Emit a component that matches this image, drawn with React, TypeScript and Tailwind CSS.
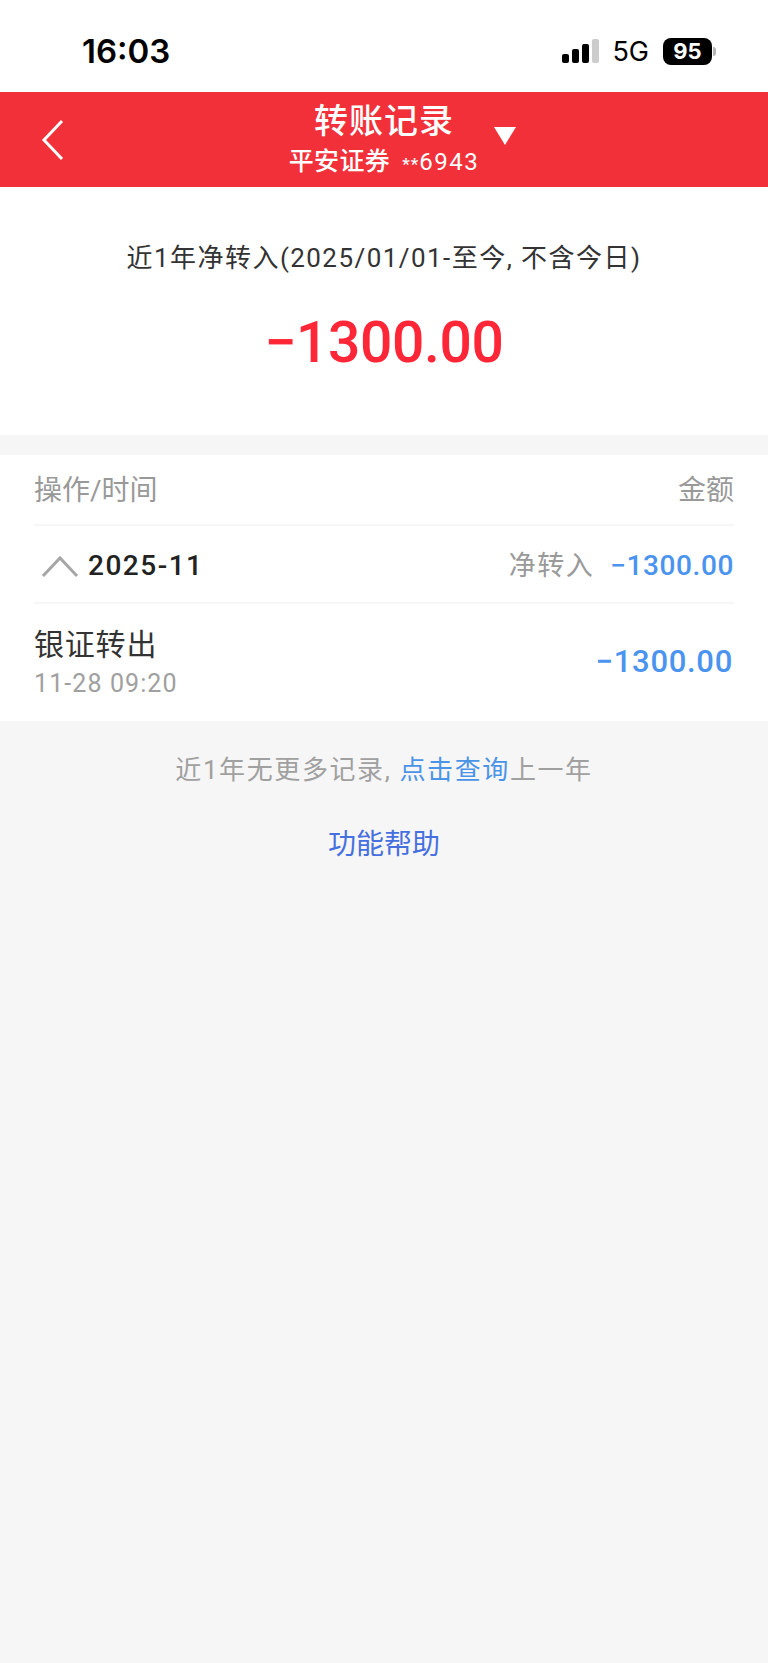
import React from 'react';

const cjk = { fontFamily: 'Roboto, "Noto Sans CJK SC", sans-serif' };

const StatusBar = () => (
  <div className="h-[92px] bg-white flex items-center justify-between pl-[82px] pr-[52px] pt-[10px] text-black">
    <span className="text-[33px] font-semibold leading-none" style={{ fontFamily: 'Inter, sans-serif' }}>
      16:03
    </span>
    <div className="flex items-center">
      <svg width="38" height="26" viewBox="0 0 38 26" className="mr-[12px]">
        <rect x="0" y="16" width="7" height="9" rx="2" fill="#000" />
        <rect x="10" y="11" width="7" height="14" rx="2" fill="#000" />
        <rect x="20" y="6" width="7" height="19" rx="2" fill="#000" />
        <rect x="30" y="1" width="7" height="24" rx="2" fill="#ccc" />
      </svg>
      <span className="text-[27px] font-normal leading-none mr-[14px]" style={{ fontFamily: 'Inter, sans-serif' }}>5G</span>
      <div className="w-[49px] h-[27px] rounded-[8px] bg-black text-white flex items-center justify-center text-[22px] font-bold leading-none" style={{ fontFamily: 'Inter, sans-serif' }}>
        95
      </div>
      <div className="w-[3px] h-[9px] ml-[1px] rounded-r-full bg-[#b5b5b5]" />
    </div>
  </div>
);

const Header = () => (
  <div className="relative h-[95px] bg-[#f2303a] text-white flex flex-col items-center">
    <svg width="26" height="42" viewBox="0 0 26 42" className="absolute left-[40px] top-[27px]" fill="none" stroke="#fff" strokeWidth="3">
      <path d="M22 2 L4 21 L22 40" />
    </svg>
    <div className="text-[34px] font-medium leading-none mt-[12px] tracking-[1px]">转账记录</div>
    <div className="flex items-baseline text-[25px] font-medium leading-none mt-[11px] tracking-[0.4px]">
      <span>平安证券</span>
      <span className="text-[17px] ml-[12px] tracking-[1px]">**</span>
      <span className="text-[24px] font-normal tracking-[1.5px]">6943</span>
    </div>
    <svg width="22" height="18" viewBox="0 0 22 18" className="absolute left-[494px] top-[35px]">
      <path d="M0 0 H22 L11 18 Z" fill="#fff" />
    </svg>
  </div>
);

const Summary = () => (
  <div className="h-[248px] bg-white flex flex-col items-center">
    <div className="mt-[55px] text-[26px] leading-[32px] text-[#333] tracking-[1.45px]">近1年净转入(2025/01/01-至今, 不含今日)</div>
    <div className="mt-[35px] text-[57px] font-medium leading-[68px] text-[#ff2638] tracking-[-0.4px]">−1300.00</div>
  </div>
);

const Records = () => (
  <div className="mt-[20px] bg-white px-[34px]">
    <div className="h-[71px] flex items-center justify-between border-b-2 border-[#f7f7f7] text-[28px] text-[#999] pt-[2px]">
      <span>操作/时间</span>
      <span>金额</span>
    </div>
    <div className="h-[78px] flex items-center justify-between border-b-2 border-[#f7f7f7] pt-[4px]">
      <div className="flex items-center">
        <svg width="38" height="24" viewBox="0 0 38 24" className="ml-[7px] mr-[9px]" fill="none" stroke="#a6a6a6" strokeWidth="3">
          <path d="M2 22 L19 4 L36 22" />
        </svg>
        <span className="text-[28px] font-medium text-[#222] tracking-[1.5px]">2025-11</span>
      </div>
      <div className="flex items-center">
        <span className="text-[27px] text-[#999] mr-[16px] tracking-[1.5px]">净转入</span>
        <span className="text-[28px] font-medium text-[#4a94f0] tracking-[0.6px]">−1300.00</span>
      </div>
    </div>
    <div className="h-[117px] flex items-center justify-between">
      <div>
        <div className="text-[30px] leading-[38px] text-[#333] tracking-[0.8px]">银证转出</div>
        <div className="text-[25px] leading-[30px] text-[#a0a0a0] mt-[5px] tracking-[1.1px]">11-28 09:20</div>
      </div>
      <span className="text-[31px] font-medium text-[#4a94f0] mr-[1px] tracking-[0.7px]">−1300.00</span>
    </div>
  </div>
);

export default function App() {
  return (
    <div className="w-[768px] min-h-[1663px] bg-[#f6f6f6]" style={cjk}>
      <StatusBar />
      <Header />
      <Summary />
      <Records />
      <div className="text-center text-[26px] leading-[32px] text-[#a0a0a0] mt-[33px] tracking-[1.6px]">
        近1年无更多记录, <span className="text-[#4a94e8]">点击查询</span>上一年
      </div>
      <div className="text-center text-[28px] leading-[36px] text-[#4670e0] mt-[41px]">功能帮助</div>
    </div>
  );
}
